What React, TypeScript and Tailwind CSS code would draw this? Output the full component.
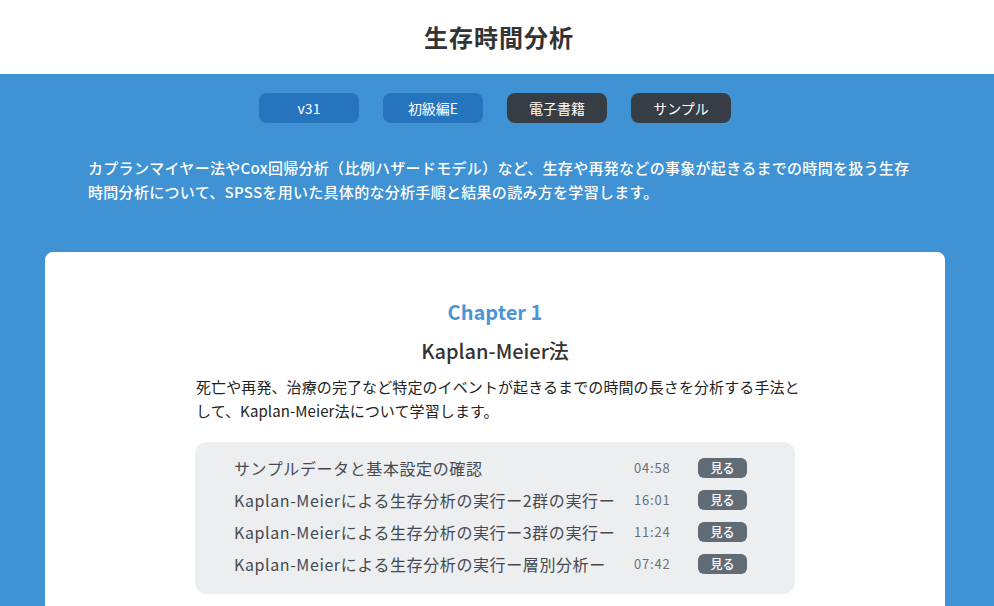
const font = { fontFamily: '"Noto Sans CJK JP", "Noto Sans", sans-serif' }

const tags = [
  { label: 'v31', dark: false },
  { label: '初級編E', dark: false },
  { label: '電子書籍', dark: true },
  { label: 'サンプル', dark: true },
]

const lessons = [
  { title: 'サンプルデータと基本設定の確認', time: '04:58' },
  { title: 'Kaplan-Meierによる生存分析の実行ー2群の実行ー', time: '16:01' },
  { title: 'Kaplan-Meierによる生存分析の実行ー3群の実行ー', time: '11:24' },
  { title: 'Kaplan-Meierによる生存分析の実行ー層別分析ー', time: '07:42' },
]

export default function App() {
  return (
    <div className="min-h-screen bg-[#3f92d4] text-[#333]" style={font}>
      <header className="h-[74px] bg-white flex items-center justify-center pl-1">
        <h1 className="text-[24px] font-bold tracking-[1px] text-[#333]">生存時間分析</h1>
      </header>

      <section className="pt-[19px] pb-12">
        <div className="flex justify-center gap-6 pr-1">
          {tags.map((t) => (
            <span
              key={t.label}
              className={
                'w-[100px] h-[30px] rounded-lg flex items-center justify-center text-[14px] text-white ' +
                (t.dark ? 'bg-[#373d44]' : 'bg-[#2673be]')
              }
            >
              {t.label}
            </span>
          ))}
        </div>
        <p className="mt-[33px] ml-[88px] mr-[60px] text-[15px] leading-6 font-medium tracking-[0.3px] text-white whitespace-nowrap">
          カプランマイヤー法やCox回帰分析（比例ハザードモデル）など、生存や再発などの事象が起きるまでの時間を扱う生存
          <br />
          時間分析について、SPSSを用いた具体的な分析手順と結果の読み方を学習します。
        </p>
      </section>

      <main className="ml-[45px] mr-[49px] bg-white rounded-lg pt-[46px] pb-10">
        <div className="flex flex-col items-center">
          <p className="text-[20px] leading-7 font-semibold text-[#4a94d6]">Chapter 1</p>
          <h2 className="mt-[11px] text-[20px] leading-7 font-medium text-[#333]">Kaplan-Meier法</h2>
          <p className="mt-[10px] w-[600px] pl-px text-[15px] leading-6 tracking-[0.1px] text-[#222] whitespace-nowrap">
            死亡や再発、治療の完了など特定のイベントが起きるまでの時間の長さを分析する手法と
            <br />
            して、Kaplan-Meier法について学習します。
          </p>
          <ul className="mt-[19px] w-[600px] rounded-xl bg-[#eceef0] pl-[39px] pt-[10px] pb-[14px]">
            {lessons.map((l) => (
              <li key={l.time} className="h-8 flex items-center">
                <span className="w-[400px] text-[16px] tracking-[0.6px] text-[#454a51] whitespace-nowrap">{l.title}</span>
                <span className="w-[64px] text-[13px] tracking-[0.8px] text-[#6b7078]">{l.time}</span>
                <span className="w-[49px] h-5 rounded-md bg-[#5f6b75] text-white text-[12px] font-medium flex items-center justify-center">
                  見る
                </span>
              </li>
            ))}
          </ul>
        </div>
      </main>
    </div>
  )
}
